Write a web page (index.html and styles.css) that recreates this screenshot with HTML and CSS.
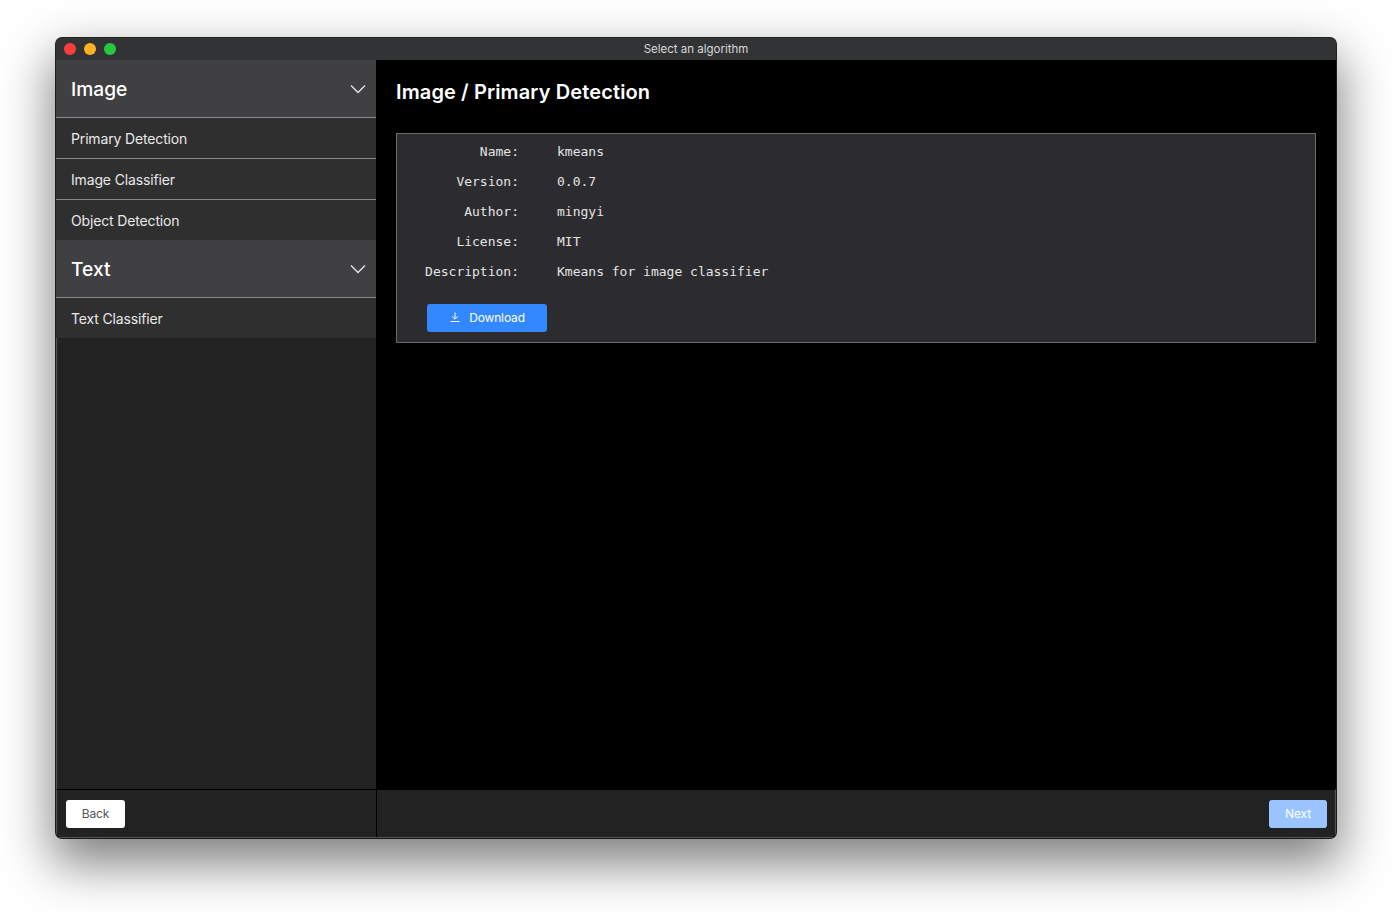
FILE: index.html
```html
<!DOCTYPE html>
<html lang="en">
<head>
<meta charset="utf-8">
<title>Select an algorithm</title>
<link rel="stylesheet" href="styles.css">
</head>
<body>
<div class="window">
  <header class="titlebar">
    <div class="lights"><span class="light red"></span><span class="light yellow"></span><span class="light green"></span></div>
    <div class="title">Select an algorithm</div>
  </header>
  <div class="main">
    <aside class="sidebar">
      <div class="group-head"><span>Image</span>
        <svg class="chev" width="16" height="10" viewBox="0 0 16 10"><path d="M1 1.5 8 8.5 15 1.5"/></svg></div>
      <div class="item">Primary Detection</div>
      <div class="item">Image Classifier</div>
      <div class="item last">Object Detection</div>
      <div class="group-head"><span>Text</span>
        <svg class="chev" width="16" height="10" viewBox="0 0 16 10"><path d="M1 1.5 8 8.5 15 1.5"/></svg></div>
      <div class="item last">Text Classifier</div>
    </aside>
    <main class="content">
      <h1 class="heading">Image / Primary Detection</h1>
      <section class="card">
        <dl class="info">
          <dt>Name:</dt><dd>kmeans</dd>
          <dt>Version:</dt><dd>0.0.7</dd>
          <dt>Author:</dt><dd>mingyi</dd>
          <dt>License:</dt><dd>MIT</dd>
          <dt>Description:</dt><dd>Kmeans for image classifier</dd>
        </dl>
        <button class="btn download">
          <svg width="12" height="12" viewBox="0 0 12 12"><path d="M6 1.5V8M3.2 5.4 6 8.2 8.8 5.4M1.5 10.5H10.5"/></svg>
          Download</button>
      </section>
    </main>
  </div>
  <footer class="footer">
    <div class="foot-left"><button class="btn back">Back</button></div>
    <div class="foot-right"><button class="btn next">Next</button></div>
  </footer>
</div>
</body>
</html>
```
FILE: styles.css
```css
* { box-sizing: border-box; }
html, body { margin: 0; height: 100%; }
body {
  background: #fff;
  padding: 38px 56px 74px;
  font-family: Inter, "Liberation Sans", sans-serif;
  overflow: hidden;
}
.window {
  height: 800px;
  display: flex;
  flex-direction: column;
  border-radius: 6px;
  overflow: hidden;
  background: #222;
  box-shadow: 0 22px 50px 4px rgba(0,0,0,.5), 0 0 0 1px rgba(0,0,0,.85);
}
.titlebar {
  height: 22px;
  flex: none;
  background: #323335;
  display: flex;
  align-items: center;
  justify-content: center;
  position: relative;
}
.lights { position: absolute; left: 8px; top: 5px; display: flex; gap: 8px; }
.light { width: 12px; height: 12px; border-radius: 50%; }
.red { background: #fc3d3f; }
.yellow { background: #fdb223; }
.green { background: #27c83f; }
.title { font-size: 11.5px; color: #d8d8d8; line-height: 22px; }
.main { flex: 1; display: flex; min-height: 0; }
.sidebar { width: 320px; flex: none; background: #222; border-left: 1px solid #555; }
.group-head {
  height: 58px;
  margin-left: -1px;
  background: #404043;
  border-bottom: 1px solid #88888a;
  padding: 0 10px 0 15px;
  display: flex;
  align-items: center;
  justify-content: space-between;
  color: #fff;
  font-size: 19.2px;
  font-weight: 500;
}
.chev { fill: none; stroke: #e6e6e6; stroke-width: 1.3; }
.item {
  height: 41px;
  margin-left: -1px;
  background: #2f2f30;
  border-bottom: 1px solid #88888a;
  padding-left: 15px;
  display: flex;
  align-items: center;
  color: #e8e8e8;
  font-size: 14px;
  letter-spacing: -0.15px;
}
.item.last { height: 40px; border-bottom: 0; }
.content { flex: 1; background: #000; padding: 19px 20px 20px; }
.heading { margin: 0 0 28px; font-size: 20px; line-height: 26px; font-weight: 600; letter-spacing: 0.12px; color: #fff; }
.card {
  height: 210px;
  background: #2c2c30;
  border: 1px solid #6a6a6a;
  padding: 3px 30px 0;
}
.info {
  margin: 0 0 17px -2px;
  display: grid;
  grid-template-columns: 94px 1fr;
  column-gap: 38px;
  grid-auto-rows: 30px;
  font: 13px/30px "DejaVu Sans Mono", monospace;
  color: #e4e4e4;
}
.info dt { text-align: right; }
.info dd { margin: 0; }
.btn {
  height: 28px;
  border-radius: 3px;
  border: 0;
  font-family: inherit;
  font-size: 12px;
  letter-spacing: -0.15px;
  padding: 0 0 2px;
}
.download {
  width: 120px;
  background: #3388ff;
  color: #fff;
  display: flex;
  align-items: center;
  justify-content: center;
  gap: 8px;
}
.download svg { fill: none; stroke: #fff; stroke-width: 1; }
.footer { height: 49px; flex: none; display: flex; background: #222; border-top: 1px solid #000; border-bottom: 1px solid #555; border-left: 1px solid #555; border-right: 1px solid #555; }
.foot-left { width: 320px; flex: none; border-right: 1px solid #000; padding: 10px 9px; }
.foot-right { flex: 1; display: flex; justify-content: flex-end; padding: 10px 8px 0 0; }
.back { width: 59px; background: #fff; color: #555; }
.next { width: 58px; background: #99c4ff; color: #fff; }
```
